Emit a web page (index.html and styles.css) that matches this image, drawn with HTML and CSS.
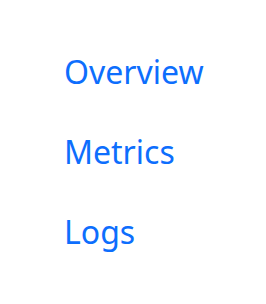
FILE: index.html
```html
<!DOCTYPE html>
<html lang="en">
<head>
  <meta charset="UTF-8" />
  <meta name="viewport" content="width=device-width, initial-scale=1" />
  <title>Nav</title>
  <link rel="stylesheet" href="styles.css">
</head>
<body>
  <nav class="side-nav">
    <a href="#overview">Overview</a>
    <a href="#metrics">Metrics</a>
    <a href="#logs">Logs</a>
  </nav>
</body>
</html>
```

FILE: styles.css
```css
body {
  margin: 0;
  background: #fff;
  font-family: "Noto Sans", sans-serif;
}
.side-nav {
  display: flex;
  flex-direction: column;
  gap: 40px;
  padding: 52px 0 0 64px;
}
.side-nav a {
  color: #0d6efd;
  text-decoration: none;
  font-size: 32px;
  line-height: 40px;
}
```
